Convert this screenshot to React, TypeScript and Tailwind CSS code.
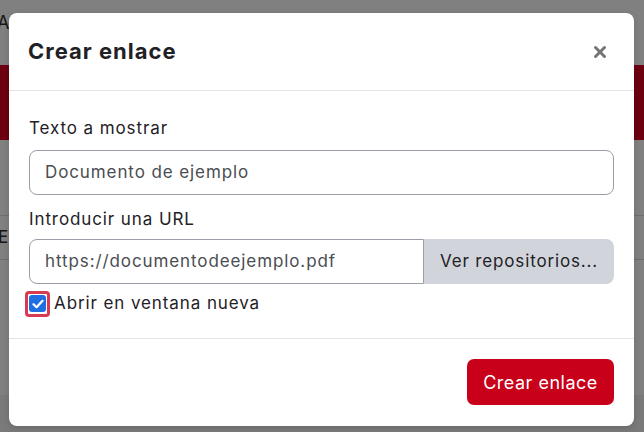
import React from "react";

function CloseIcon() {
  return (
    <svg width="14" height="14" viewBox="0 0 14 14" aria-hidden="true">
      <path d="M2.5 2.5 L11.5 11.5 M11.5 2.5 L2.5 11.5" stroke="#747474" strokeWidth="3" strokeLinecap="round" />
    </svg>
  );
}

function CheckMark() {
  return (
    <svg width="12" height="10" viewBox="0 0 12 10" aria-hidden="true">
      <path d="M1.5 5.2 L4.6 8.2 L10.5 1.8" stroke="#ffffff" strokeWidth="2.2" fill="none" strokeLinecap="round" strokeLinejoin="round" />
    </svg>
  );
}

export default function App() {
  return (
    <div
      className="relative w-[644px] h-[432px] overflow-hidden bg-[#808080]"
      style={{ fontFamily: "Inter, 'Noto Sans', sans-serif" }}
    >
      {/* page underneath the overlay */}
      <div className="flex flex-col h-full">
        <div className="h-[65px] pt-[9px] -ml-[3px] text-[18px] text-[#161616]">A</div>
        <div className="h-[75px] bg-[#6c0010]" />
        <div className="h-[75px]" />
        <div className="h-[45px] border-y border-[#6e6e6e] flex items-center -ml-[2px] text-[17px] text-[#161616]">
          E
        </div>
        <div className="flex-1" />
        <div className="h-[37px] bg-[#7a7a7a]" />
      </div>

      {/* dialog */}
      <div className="absolute left-[9px] top-[13px] w-[625px] bg-white rounded-[8px] flex flex-col shadow-[0_2px_6px_rgba(0,0,0,0.15)]">
        <div className="h-[78px] border-b border-[#e3e3e8] flex items-center justify-between pl-[19px] pr-[26px]">
          <h2 className="text-[22px] font-bold text-[#1f2126] tracking-[1px]">Crear enlace</h2>
          <button className="w-[16px] h-[16px] flex items-center justify-center">
            <CloseIcon />
          </button>
        </div>

        <div className="flex flex-col pt-[24px] pb-[21px] px-[20px] tracking-[0.9px]">
          <label className="h-[26px] leading-[26px] text-[17px] text-[#1f2126]">Texto a mostrar</label>
          <div className="mt-[9px] h-[45px] border border-[#9a9ea6] rounded-[8px] flex items-center pl-[15px] text-[17px] text-[#4a4d52]">
            Documento de ejemplo
          </div>

          <label className="mt-[11px] h-[26px] leading-[26px] text-[17px] text-[#1f2126]">Introducir una URL</label>
          <div className="mt-[7px] h-[45px] flex">
            <div className="flex-1 border border-[#9a9ea6] rounded-l-[8px] flex items-center pl-[15px] text-[17px] text-[#4a4d52]">
              https://documentodeejemplo.pdf
            </div>
            <button className="w-[190px] bg-[#d1d5db] rounded-r-[8px] text-[17px] text-[#1f2126] flex items-center justify-center tracking-[0.85px]">
              Ver repositorios...
            </button>
          </div>

          <div className="mt-[6px] h-[27px] flex items-center -ml-[4px]">
            <span className="w-[25px] h-[26px] rounded-[4px] border-[3px] border-[#d73a52] flex items-center justify-center">
              <span className="w-[17px] h-[17px] rounded-[3px] bg-[#1f6fe3] flex items-center justify-center">
                <CheckMark />
              </span>
            </span>
            <span className="ml-[4px] text-[17px] text-[#1f2126]">Abrir en ventana nueva</span>
          </div>
        </div>

        <div className="border-t border-[#e3e3e8] pt-[20px] pb-[21px] px-[20px] flex justify-end">
          <button className="h-[46px] w-[147px] bg-[#c8001a] rounded-[7px] text-white text-[18px] tracking-[0.5px]">
            Crear enlace
          </button>
        </div>
      </div>
    </div>
  );
}
